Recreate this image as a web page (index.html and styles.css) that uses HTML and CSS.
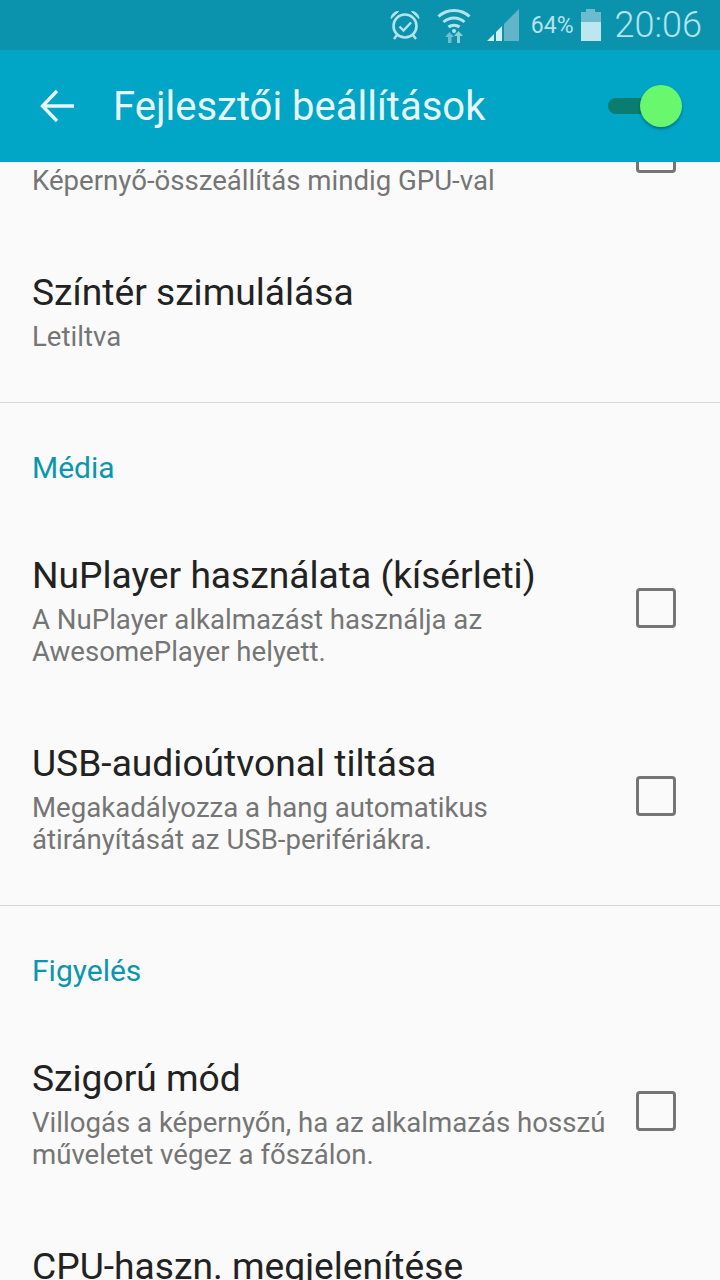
FILE: index.html
```html
<!DOCTYPE html>
<html lang="hu">
<head>
    <meta charset="UTF-8">
    <meta name="viewport" content="width=device-width, initial-scale=1.0">
    <title>Fejlesztői beállítások</title>
    <link rel="stylesheet" href="styles.css">
</head>
<body>
    <div class="status-bar">
        <svg class="icon-alarm" width="32" height="32" viewBox="0 0 32 32" fill="none" stroke="#b5e3ec">
            <circle cx="16" cy="17" r="11.5" stroke-width="2.6"/>
            <path d="M10.5 17.5l4 4 7.5-8" stroke-width="2.4"/>
            <path d="M2 9.5C2.500 5 5.500 2.500 9.500 2.500zM30 9.500C29.500 5 26.500 2.500 22.500 2.500z" fill="#b5e3ec" stroke-width="1"/>
            <path d="M8 26l-3 4M24 26l3 4" stroke-width="2.4"/>
        </svg>
        <svg class="icon-wifi" width="34" height="36" viewBox="0 0 34 36" fill="none" stroke="#b5e3ec" stroke-width="3">
            <path d="M1.500 9.500C10 1.500 24 1.500 32.500 9.500"/>
            <path d="M6.500 15C12.500 9.500 21.500 9.500 27.500 15"/>
            <path d="M11.500 20C14.500 17.500 19.500 17.500 22.500 20"/>
            <circle cx="17" cy="24" r="2" fill="#b5e3ec" stroke="none"/>
            <path d="M11 36v-6H8l4.500-5 4.500 5h-2.500v6z" fill="#6fbccd" stroke="none"/>
            <path d="M20 36v-7h-3l4.500-5 4.500 5h-3v7z" fill="#8fcfdc" stroke="none"/>
        </svg>
        <svg class="icon-signal" width="32" height="32" viewBox="0 0 32 32">
            <path d="M17 15L32 0V32H17z" fill="#62b5c9"/>
            <path d="M0 32L7 25V32zM9 32V23L15 17V32z" fill="#d5f0f5"/>
        </svg>
        <span class="battery-text">64%</span>
        <div class="battery">
            <div class="battery-cap"></div>
            <div class="battery-body">
                <div class="battery-fill"></div>
            </div>
        </div>
        <span class="clock">20:06</span>
    </div>

    <header class="toolbar">
        <svg class="back-arrow" width="34" height="34" viewBox="0 0 34 34" fill="none" stroke="#e6f6fa" stroke-width="3.400">
            <path d="M34 17H3M17 2L2.500 17 17 32"/>
        </svg>
        <h1 class="toolbar-title">Fejlesztői beállítások</h1>
        <div class="switch">
            <div class="switch-track"></div>
            <div class="switch-thumb"></div>
        </div>
    </header>

    <main class="content">
        <div class="list">
            <div class="row">
                <div class="row-text">
                    <div class="row-title">&nbsp;</div>
                    <div class="row-sub">Képernyő-összeállítás mindig GPU-val</div>
                </div>
                <div class="checkbox"></div>
            </div>
            <div class="row">
                <div class="row-text">
                    <div class="row-title">Színtér szimulálása</div>
                    <div class="row-sub">Letiltva</div>
                </div>
            </div>

            <section class="group">
                <h2 class="group-title">Média</h2>
                <div class="row">
                    <div class="row-text">
                        <div class="row-title">NuPlayer használata (kísérleti)</div>
                        <div class="row-sub">A NuPlayer alkalmazást használja az<br>AwesomePlayer helyett.</div>
                    </div>
                    <div class="checkbox"></div>
                </div>
                <div class="row">
                    <div class="row-text">
                        <div class="row-title">USB-audioútvonal tiltása</div>
                        <div class="row-sub">Megakadályozza a hang automatikus<br>átirányítását az USB-perifériákra.</div>
                    </div>
                    <div class="checkbox"></div>
                </div>
            </section>

            <section class="group">
                <h2 class="group-title">Figyelés</h2>
                <div class="row">
                    <div class="row-text">
                        <div class="row-title">Szigorú mód</div>
                        <div class="row-sub">Villogás a képernyőn, ha az alkalmazás hosszú<br>műveletet végez a főszálon.</div>
                    </div>
                    <div class="checkbox"></div>
                </div>
                <div class="row">
                    <div class="row-text">
                        <div class="row-title">CPU-haszn. megjelenítése</div>
                    </div>
                </div>
            </section>
        </div>
    </main>
</body>
</html>
```

FILE: styles.css
```css
* {
    box-sizing: border-box;
}
html, body {
    height: 100%;
}
body {
    margin: 0;
    display: flex;
    flex-direction: column;
    height: 1280px;
    overflow: hidden;
    font-family: Roboto, "Liberation Sans", sans-serif;
    background-color: #fafafa;
}
.status-bar {
    height: 50px;
    flex-shrink: 0;
    display: flex;
    align-items: center;
    padding-right: 18px;
    justify-content: flex-end;
    background-color: #0b93ad;
    color: #b5e3ec;
}
.icon-alarm {
    margin-right: 16px;
}
.icon-wifi {
    margin-right: 16px;
}
.icon-signal {
    margin-right: 12px;
}
.battery-text {
    font-size: 23px;
    margin-right: 7px;
}
.battery {
    width: 20px;
    height: 32px;
    margin-right: 14px;
    display: flex;
    flex-direction: column;
    align-items: center;
}
.battery-cap {
    width: 9px;
    height: 3px;
    background-color: #6dbccd;
}
.battery-body {
    flex: 1;
    width: 100%;
    display: flex;
    align-items: flex-end;
    background-color: #6dbccd;
}
.battery-fill {
    width: 100%;
    height: 64%;
    background-color: #bde6ee;
}
.clock {
    font-size: 36px;
    font-weight: 300;
}
.toolbar {
    height: 112px;
    flex-shrink: 0;
    display: flex;
    align-items: center;
    padding-left: 40px;
    background-color: #01a5c6;
    color: #e6f6fa;
}
.back-arrow {
    margin-right: 39px;
}
.toolbar-title {
    margin: 0;
    font-size: 40px;
    font-weight: 400;
}
.switch {
    position: relative;
    width: 74px;
    height: 42px;
    margin-left: auto;
    margin-right: 38px;
}
.switch-track {
    position: absolute;
    left: 0;
    top: 13px;
    width: 50px;
    height: 16px;
    border-radius: 8px;
    background-color: #0b7d70;
}
.switch-thumb {
    position: absolute;
    right: 0;
    top: 0;
    width: 42px;
    height: 42px;
    border-radius: 50%;
    background-color: #69f76d;
    box-shadow: 0 2px 3px rgba(0, 0, 0, 0.3);
}
.content {
    flex: 1;
    overflow: hidden;
}
/* a lista el van gorgetve, az elso sor a fejlec ala csuszik */
.list {
    margin-top: -88px;
}
.row {
    display: flex;
    align-items: center;
    justify-content: space-between;
    padding: 39px 44px 33px 32px;
}
.row-title {
    font-size: 37.2px;
    line-height: 46px;
    margin-bottom: 6px;
    color: #222;
}
.row-sub {
    font-size: 27.6px;
    line-height: 32px;
    color: #757575;
}
.checkbox {
    width: 40px;
    height: 40px;
    flex-shrink: 0;
    margin-bottom: 5px;
    border: 3px solid #757575;
    border-radius: 4px;
}
.group {
    margin-top: 16px;
    border-top: 1px solid #d6d6d6;
}
.group-title {
    margin: 0;
    height: 110px;
    padding: 47px 32px 0;
    font-size: 30px;
    line-height: 36px;
    font-weight: 400;
    color: #0b96ae;
}
```
